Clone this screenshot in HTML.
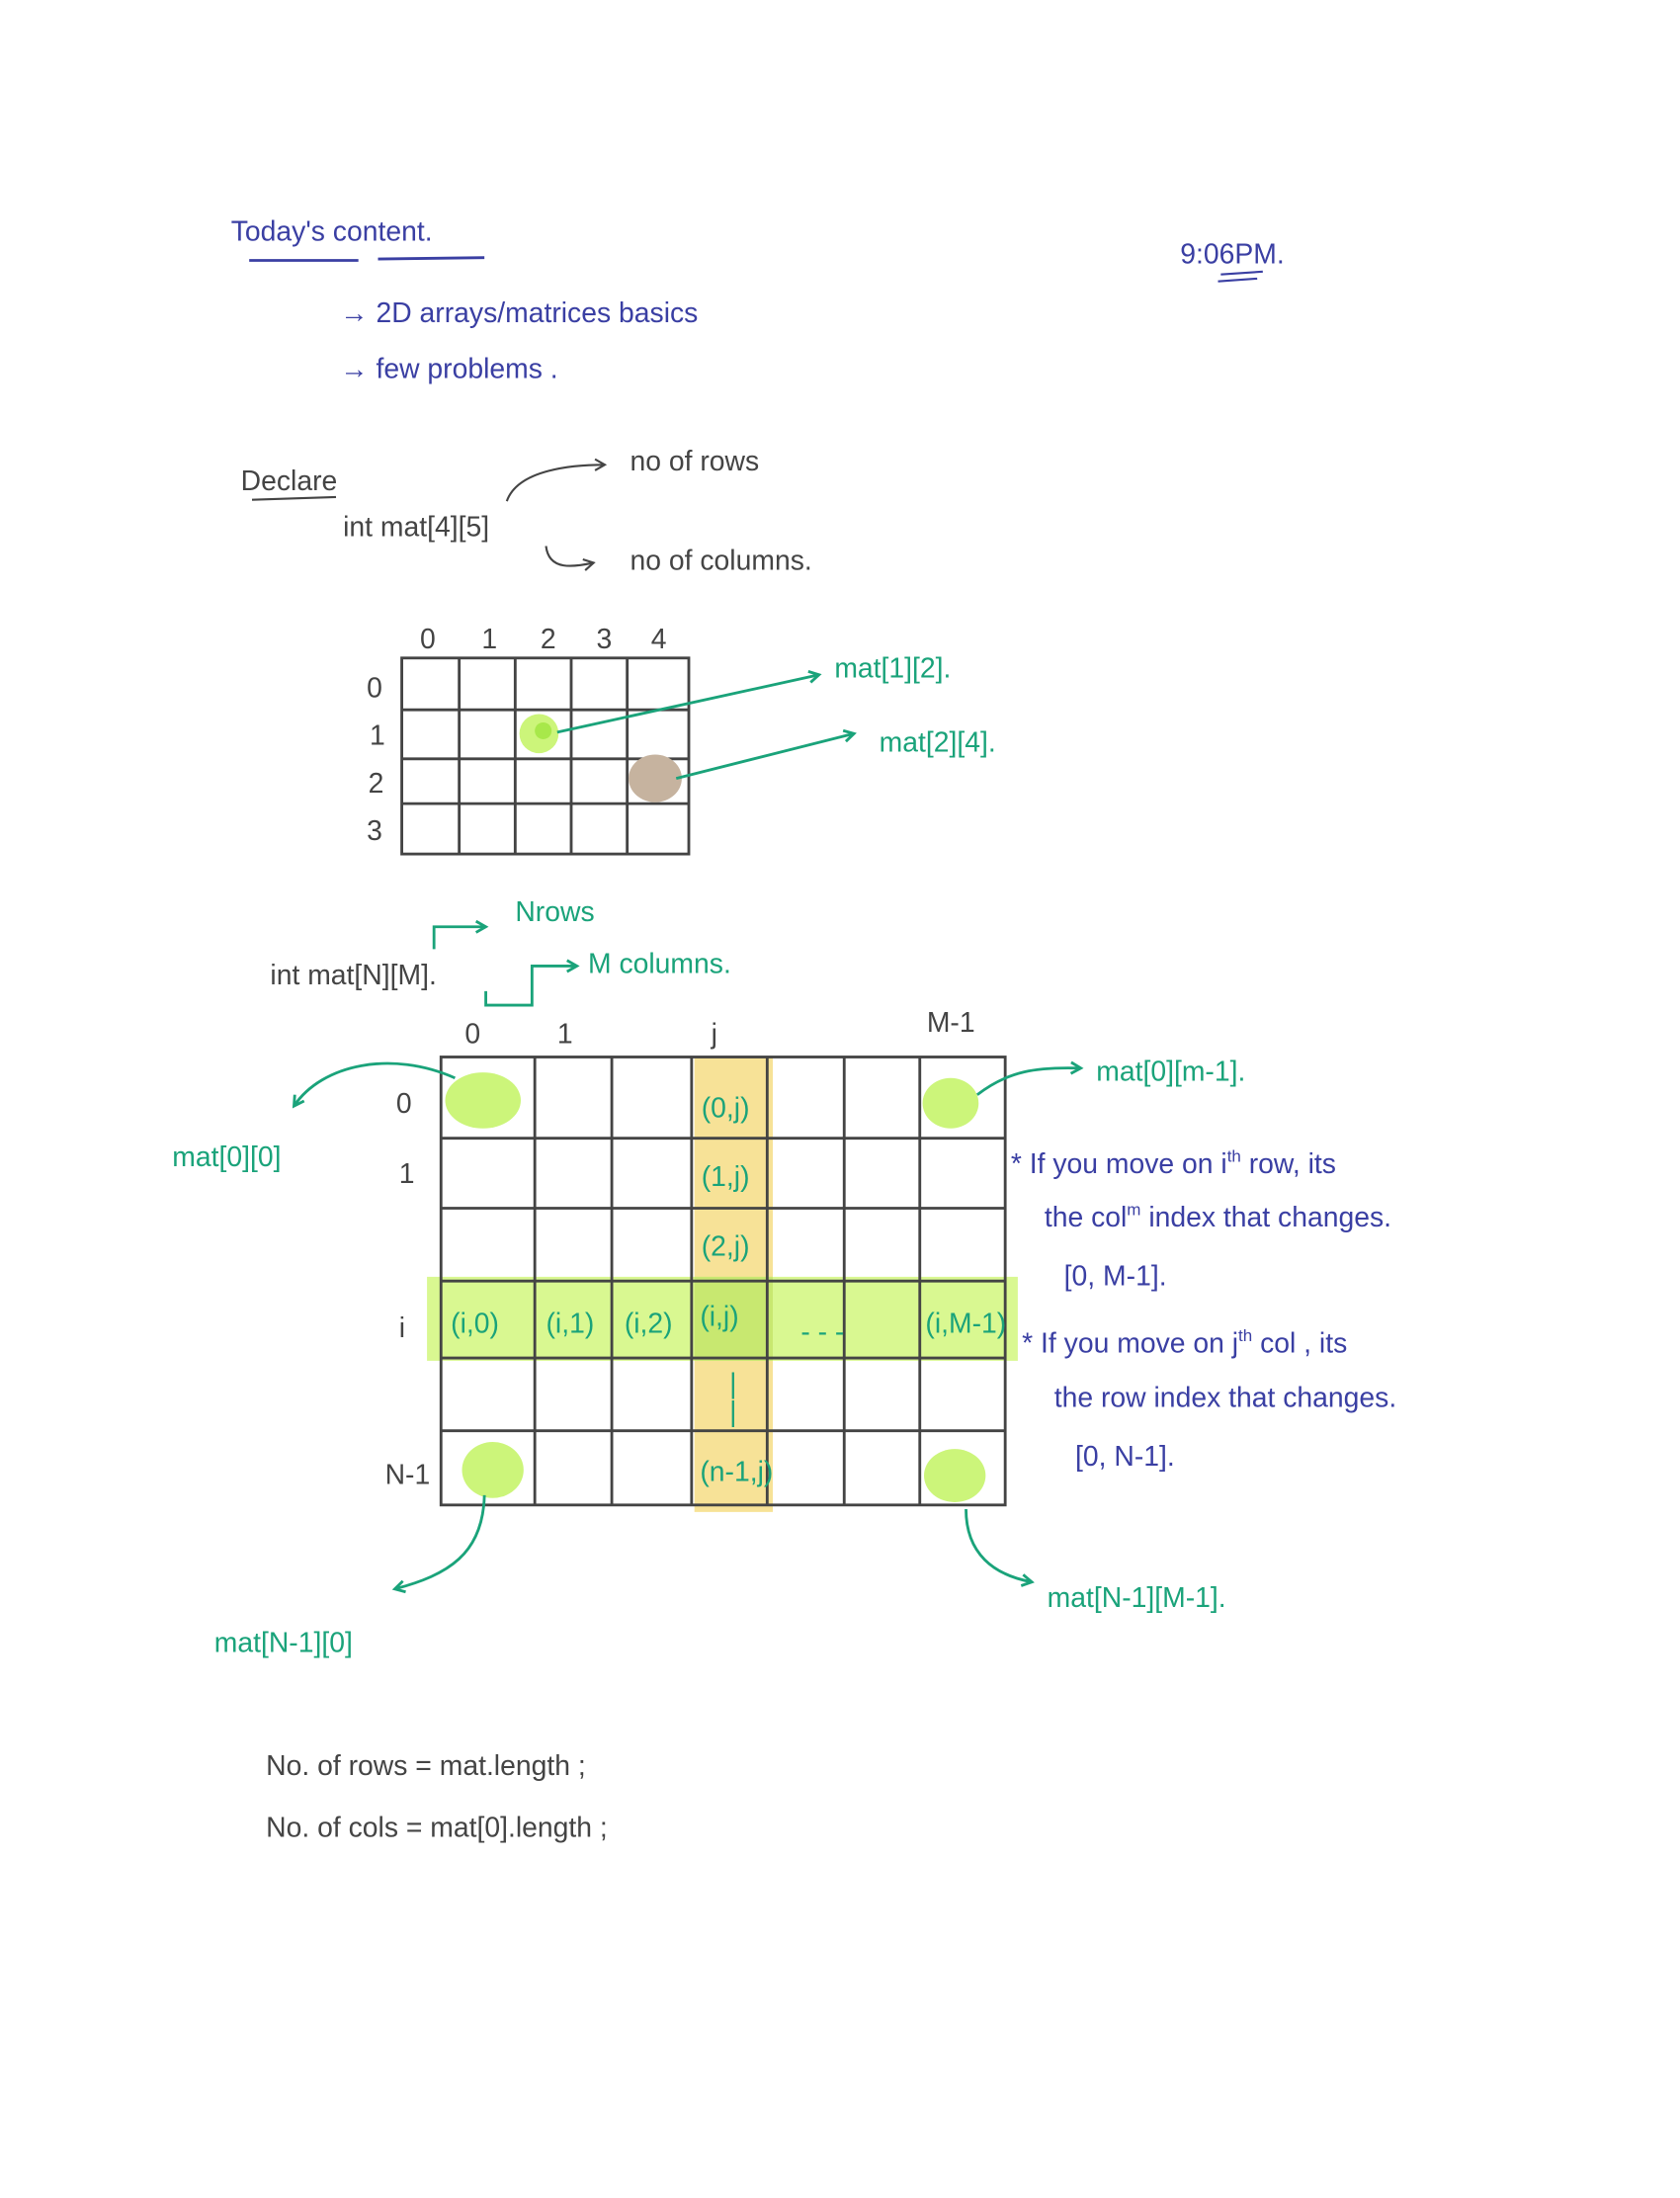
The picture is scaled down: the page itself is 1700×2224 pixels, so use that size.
<!DOCTYPE html>
<html><head><meta charset="utf-8"><style>
html,body{margin:0;padding:0;background:#fff;}
svg{display:block}
text{font-family:"Liberation Sans",sans-serif;}
.b{fill:#3a3fa3;font-size:20px}
.g{fill:#1aa37a;font-size:20px}
.k{fill:#444;font-size:20px}
</style></head><body>
<svg width="1700" height="2224" viewBox="0 0 1200 1570" preserveAspectRatio="none" xmlns="http://www.w3.org/2000/svg">
<defs>
<marker id="ag" markerWidth="10" markerHeight="10" refX="8" refY="5" orient="auto" markerUnits="userSpaceOnUse"><path d="M1 1 L8 5 L1 9" stroke="#1aa37a" stroke-width="2" fill="none"/></marker>
<marker id="ak" markerWidth="10" markerHeight="10" refX="8" refY="5" orient="auto" markerUnits="userSpaceOnUse"><path d="M1 1 L8 5 L1 9" stroke="#444" stroke-width="1.5" fill="none"/></marker>
</defs>
<rect width="1200" height="1570" fill="#fff"/>
<text x="165" y="172" class="b" font-size="22">Today's  content.</text>
<path d="M178 186 L256 186 M270 185 L346 184" stroke="#3a3fa3" stroke-width="2" fill="none"/>
<text x="843" y="188" class="b" font-size="18">9:06PM.</text>
<path d="M872 196 L902 194 M870 201 L898 199" stroke="#3a3fa3" stroke-width="1.5"/>
<text x="243" y="230" class="b">→  2D   arrays/matrices  basics</text>
<text x="243" y="270" class="b">→  few  problems .</text>
<text x="172" y="350" class="k">Declare</text>
<path d="M180 357 L240 355" stroke="#444" stroke-width="1.5"/>
<text x="245" y="383" class="k">int   mat[4][5]</text>
<path d="M362 358 C370 335 410 332 432 332" stroke="#444" stroke-width="1.5" fill="none" marker-end="url(#ak)"/>
<text x="450" y="336" class="k">no  of  rows</text>
<path d="M390 390 C392 408 410 405 424 402" stroke="#444" stroke-width="1.5" fill="none" marker-end="url(#ak)"/>
<text x="450" y="407" class="k">no  of  columns.</text>
<g stroke="#444" stroke-width="2" fill="none">
<rect x="287" y="470" width="205" height="140"/>
<path d="M328 470V610 M368 470V610 M408 470V610 M448 470V610 M287 507H492 M287 542H492 M287 574H492"/>
</g>
<g class="k" font-size="15">
<text x="300" y="463" class="k" font-size="15">0</text>
<text x="344" y="463" class="k" font-size="15">1</text>
<text x="386" y="463" class="k" font-size="15">2</text>
<text x="426" y="463" class="k" font-size="15">3</text>
<text x="465" y="463" class="k" font-size="15">4</text>
</g>
<text x="262" y="498" class="k" font-size="16">0</text>
<text x="264" y="532" class="k" font-size="16">1</text>
<text x="263" y="566" class="k" font-size="16">2</text>
<text x="262" y="600" class="k" font-size="16">3</text>
<circle cx="385" cy="524" r="14" fill="#ccf57a"/>
<circle cx="388" cy="522" r="6" fill="#a8e84a"/>
<ellipse cx="468" cy="556" rx="19" ry="17" fill="#c6b39f"/>
<path d="M398 523 L585 482" stroke="#1aa37a" stroke-width="2" marker-end="url(#ag)"/>
<path d="M483 556 L610 524" stroke="#1aa37a" stroke-width="2" marker-end="url(#ag)"/>
<text x="596" y="484" class="g">mat[1][2].</text>
<text x="628" y="537" class="g">mat[2][4].</text>
<path d="M310 678 V662 H347" stroke="#1aa37a" stroke-width="2" fill="none" marker-end="url(#ag)"/>
<text x="368" y="658" class="g" font-size="18">Nrows</text>
<text x="193" y="703" class="k">int  mat[N][M].</text>
<path d="M347 708 V718 H380 V690 H412" stroke="#1aa37a" stroke-width="2" fill="none" marker-end="url(#ag)"/>
<text x="420" y="695" class="g" font-size="18">M  columns.</text>
<rect x="496" y="755" width="56" height="325" fill="#f6dd85" opacity="0.85"/>
<rect x="305" y="912" width="422" height="60" fill="#d2f77e" opacity="0.85"/>
<rect x="496" y="912" width="56" height="60" fill="#c8e870"/>
<ellipse cx="345" cy="786" rx="27" ry="20" fill="#ccf57a"/>
<ellipse cx="679" cy="788" rx="20" ry="18" fill="#ccf57a"/>
<ellipse cx="352" cy="1050" rx="22" ry="20" fill="#ccf57a"/>
<ellipse cx="682" cy="1054" rx="22" ry="19" fill="#ccf57a"/>
<g stroke="#444" stroke-width="2" fill="none">
<rect x="315" y="755" width="403" height="320"/>
<path d="M382 755V1075 M437 755V1075 M494 755V1075 M548 755V1075 M603 755V1075 M657 755V1075 M315 813H718 M315 863H718 M315 915H718 M315 970H718 M315 1022H718"/>
</g>
<text x="332" y="745" class="k">0</text>
<text x="398" y="745" class="k">1</text>
<text x="508" y="745" class="k">j</text>
<text x="662" y="737" class="k" font-size="16">M-1</text>
<text x="283" y="795" class="k" font-size="18">0</text>
<text x="285" y="845" class="k" font-size="18">1</text>
<text x="285" y="955" class="k">i</text>
<text x="275" y="1060" class="k" font-size="17">N-1</text>
<text x="501" y="798" class="g" font-size="17">(0,j)</text>
<text x="501" y="847" class="g" font-size="17">(1,j)</text>
<text x="501" y="897" class="g" font-size="17">(2,j)</text>
<text x="322" y="952" class="g" font-size="17">(i,0)</text>
<text x="390" y="952" class="g" font-size="17">(i,1)</text>
<text x="446" y="952" class="g" font-size="17">(i,2)</text>
<text x="500" y="947" class="g" font-size="17">(i,j)</text>
<text x="572" y="958" class="g" font-size="17">-   -   -</text>
<text x="661" y="952" class="g" font-size="16">(i,M-1)</text>
<text x="521" y="995" class="g" font-size="17">|</text>
<text x="521" y="1015" class="g" font-size="17">|</text>
<text x="500" y="1058" class="g" font-size="15">(n-1,j)</text>
<path d="M325 770 C280 750 230 760 210 790" stroke="#1aa37a" stroke-width="2" fill="none" marker-end="url(#ag)"/>
<text x="123" y="833" class="g" font-size="18">mat[0][0]</text>
<path d="M698 782 C720 765 740 762 772 763" stroke="#1aa37a" stroke-width="2" fill="none" marker-end="url(#ag)"/>
<text x="783" y="772" class="g">mat[0][m-1].</text>
<path d="M346 1068 C345 1110 320 1125 282 1135" stroke="#1aa37a" stroke-width="2" fill="none" marker-end="url(#ag)"/>
<text x="153" y="1180" class="g">mat[N-1][0]</text>
<path d="M690 1078 C690 1110 710 1125 737 1130" stroke="#1aa37a" stroke-width="2" fill="none" marker-end="url(#ag)"/>
<text x="748" y="1148" class="g">mat[N-1][M-1].</text>
<text x="722" y="838" class="b" font-size="18">* If  you move  on  i<tspan font-size="12" dy="-8">th</tspan><tspan dy="8"> row, its</tspan></text>
<text x="746" y="876" class="b" font-size="18">the  col<tspan font-size="12" dy="-8">m</tspan><tspan dy="8"> index  that  changes.</tspan></text>
<text x="760" y="918" class="b" font-size="18">[0, M-1].</text>
<text x="730" y="966" class="b" font-size="18">* If  you  move  on  j<tspan font-size="12" dy="-8">th</tspan><tspan dy="8"> col , its</tspan></text>
<text x="753" y="1005" class="b" font-size="18">the  row  index  that  changes.</text>
<text x="768" y="1047" class="b" font-size="18">[0, N-1].</text>
<text x="190" y="1268" class="k">No. of  rows =    mat.length ;</text>
<text x="190" y="1312" class="k">No. of  cols   =    mat[0].length ;</text>
</svg>
</body></html>
